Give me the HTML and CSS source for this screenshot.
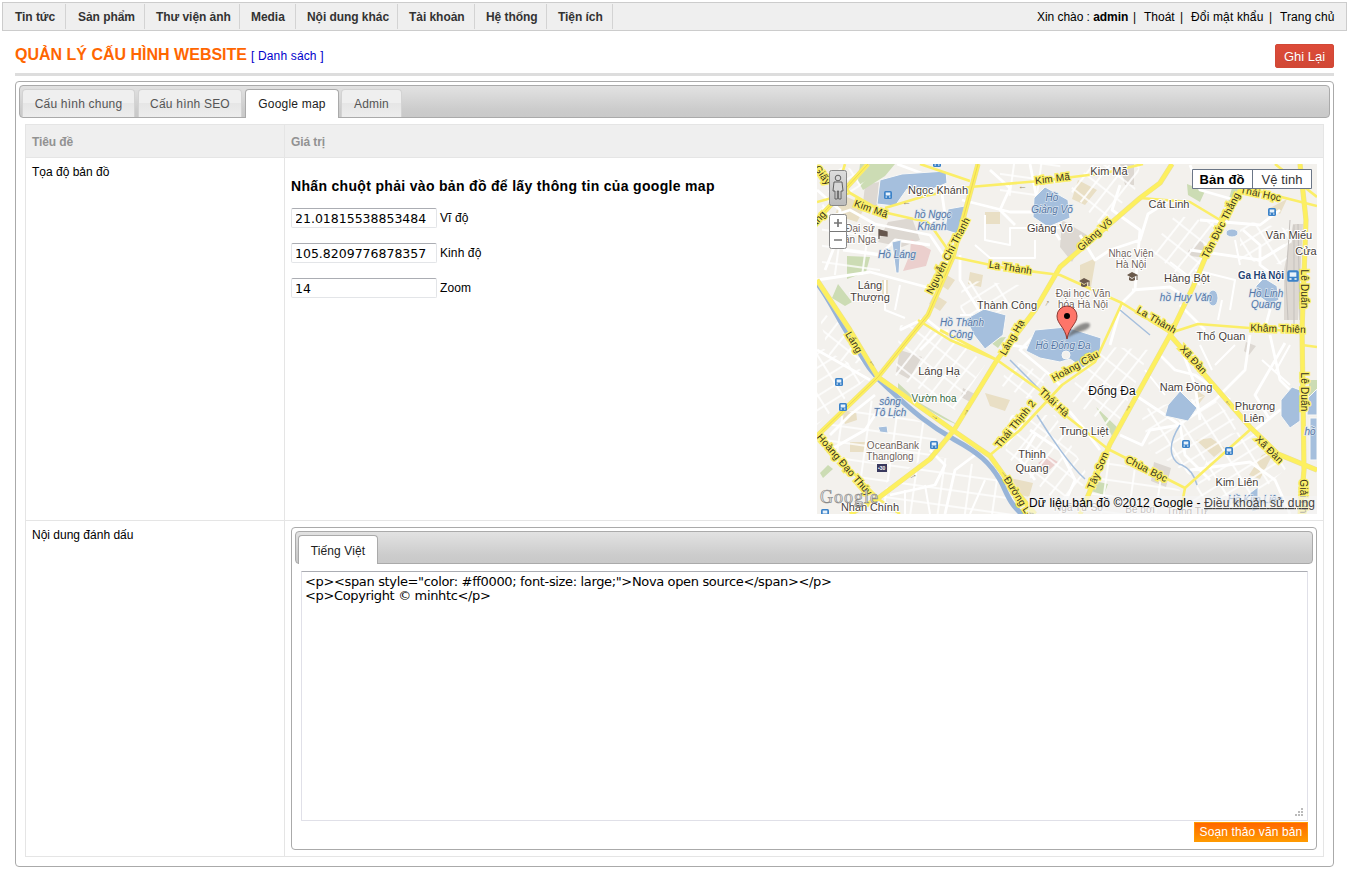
FILE: index.html
```html
<!DOCTYPE html>
<html lang="vi">
<head>
<meta charset="utf-8">
<title>Quản lý cấu hình website</title>
<link rel="stylesheet" href="styles.css">
</head>
<body>
<header class="menu">
  <nav class="menu-nav">
    <a class="w1"><span>Tin tức</span></a><a class="w2"><span>Sản phẩm</span></a><a class="w3"><span>Thư viện ảnh</span></a><a class="w4"><span>Media</span></a><a class="w5"><span>Nội dung khác</span></a><a class="w6"><span>Tài khoản</span></a><a class="w7"><span>Hệ thống</span></a><a class="w8"><span>Tiện ích</span></a>
  </nav>
  <div class="user"><span class="u1">Xin chào : <b>admin</b></span><span class="u2">|</span><span class="u3">Thoát</span><span class="u4">|</span><span class="u5">Đổi mật khẩu</span><span class="u6">|</span><span class="u7">Trang chủ</span></div>
</header>
<main class="main">
  <div class="title-row">
    <h1>QUẢN LÝ CẤU HÌNH WEBSITE</h1><span class="list-link">[ Danh sách ]</span>
    <button class="save">Ghi Lại</button>
  </div>
  <section class="tabs outer">
    <div class="tab-strip">
      <a class="tab t1">Cấu hình chung</a><a class="tab t2">Cấu hình SEO</a><a class="tab active t3">Google map</a><a class="tab t4">Admin</a>
    </div>
    <div class="grid">
      <div class="cell head">Tiêu đề</div><div class="cell head">Giá trị</div>
      <div class="cell">Tọa độ bản đồ</div>
      <div class="cell map-cell">
        <div class="fields">
          <h3>Nhấn chuột phải vào bản đồ để lấy thông tin của google map</h3>
          <label><input value="21.01815538853484">Vĩ độ</label>
          <label><input value="105.8209776878357">Kinh độ</label>
          <label><input value="14">Zoom</label>
        </div>
        <svg class="map" viewBox="817 164 500 350" width="500" height="350">
          <defs>
            <pattern id="ga" width="13" height="19" patternUnits="userSpaceOnUse" patternTransform="rotate(38)"><path d="M0 1H13M1 0V19" class="alley"/></pattern>
            <pattern id="gb" width="21" height="12" patternUnits="userSpaceOnUse" patternTransform="rotate(-32)"><path d="M0 1H21M1 0V12" class="alley"/></pattern>
            <pattern id="gc" width="27" height="16" patternUnits="userSpaceOnUse" patternTransform="rotate(8)"><path d="M0 1H27M1 0V16" class="alley"/></pattern>
            <linearGradient id="ctl" x2="0" y2="1"><stop offset="0" stop-color="#ddd"/><stop offset="1" stop-color="#bbb"/></linearGradient>
            <filter id="blur"><feGaussianBlur stdDeviation="1.3"/></filter>
            <g id="bus"><rect x="-4" y="-4" width="8" height="8" rx="1.5" fill="#3b82c8"/><rect x="-2.3" y="-2.5" width="4.600" height="3" fill="#e8f2fb"/><path d="M-2.5 2h1.5M1 2h1.5" stroke="#fff"/></g>
            <g id="cap"><path d="M-5 -1L0 -4L6 -1L0 2Z M-3 1V4Q0 6 3 4V1L0 3Z" fill="#6b5a4c"/><path d="M5 -1V4" stroke="#6b5a4c"/></g>
          </defs>
          <rect x="817" y="164" width="500" height="350" fill="#f3f1ed"/>
          <g fill="#e9dfc5">
            <path d="M842 195L866 205L857 222L835 215ZM985 212H1000V224H985ZM970 272L983 275L981 287L968 284ZM985 393L1010 400L1005 411L990 406ZM1010 478L1033 483L1029 497L1009 492ZM1078 180L1097 190L1085 205L1072 199ZM1080 265L1096 258L1091 287L1080 286ZM850 442H865V452H850ZM1196 390L1205 396L1198 405ZM1262 455L1275 450L1260 479L1249 475ZM1211 438L1225 448L1214 457L1196 440ZM934 294L947 302L940 311L929 304ZM882 280H888V294H882ZM1270 208L1287 199L1280 214ZM945 274L955 280L948 290L939 284ZM840 412L856 410L857 420L845 424Z"/>
          </g>
          <g fill="#ddd8d2">
            <path d="M888 222L912 218L920 240L902 247L878 242ZM1062 220L1087 235L1072 262L1060 247ZM1188 251L1202 239L1207 258L1190 256ZM900 350L922 357L909 379L896 372ZM1293 224L1303 224L1298 320L1284 320V270ZM1154 462L1171 468L1166 487L1151 481ZM963 388L975 394L970 402L961 397ZM1246 342L1256 346L1249 355L1244 351ZM865 185L879 182L877 208L863 203ZM1120 164H1134V185H1125Z"/>
          </g>
          <g fill="#ccdcb4">
            <path d="M860 164H895L885 176L863 190L858 181ZM847 256L870 257L866 272L847 279ZM1096 407L1118 428L1113 438L1105 422ZM1232 188L1242 190L1229 221L1224 216ZM820 473L828 465L833 469L823 478ZM995 338L1006 337L998 348L990 342ZM898 383L920 403L960 426L944 419L916 403L898 390ZM1187 184L1205 191L1200 202L1188 195ZM1309 380H1317V407H1309ZM838 284L852 302L845 306L832 298ZM1090 480L1108 484L1104 495L1088 490Z"/>
          </g>
          <path d="M911 239L931 250L926 266L903 271L910 254ZM1048 456L1058 462L1048 471L1038 463Z" fill="#ebcfcd"/>
          <g fill="url(#gb)">
            <path d="M817 345L870 375L817 425ZM962 280L1020 285L1005 318L960 315ZM1140 410L1210 395L1240 425L1190 475L1150 450ZM1215 437L1250 430L1290 465L1240 510L1190 505ZM1240 220L1295 230L1285 265L1240 260ZM840 165L870 175L830 220L818 215Z"/>
          </g>
          <g fill="url(#ga)">
            <path d="M818 310L850 330L870 365L830 360ZM900 325L950 330L985 365L955 410L895 375ZM1085 345L1150 350L1115 430L1070 400ZM1010 415L1055 415L1090 480L1060 505L1005 455ZM1175 215L1220 224L1190 285L1150 250ZM1090 165L1140 165L1135 190L1100 225L1070 190ZM1010 360L1050 375L1030 400L1000 385Z"/>
          </g>
          <g fill="url(#gc)">
            <path d="M1000 165L1060 160L1062 200L1000 195ZM817 430L870 400L940 430L930 455L875 490ZM865 500L940 457L1000 470L1020 514H865ZM1100 455L1180 490L1170 514H1085ZM822 225L880 225L880 275L822 275Z"/>
          </g>
          <g class="street">
            <path d="M820 220L850 210L875 224L930 235L950 265M817 280L870 272L930 288M900 330L925 318L940 330L920 350M962 200L1010 212L1062 212M960 255L960 280L985 320M1030 164L1038 205L1060 240M1080 235L1095 260L1110 250L1140 240L1148 214L1170 200M1120 185L1112 210L1140 230L1135 290L1122 303L1110 345M1132 290L1170 287L1190 300M1190 250L1260 260L1285 245M1200 220L1260 225L1280 210M1180 345L1195 385L1200 420M1250 335L1245 370L1215 400L1185 420L1180 425M1160 355L1175 370L1195 375L1230 400M1135 395L1180 425L1185 455L1210 480M1120 435L1142 445L1150 430L1180 425M1190 470L1250 462L1275 480L1290 514M1285 343L1255 395L1270 420M1010 345L1045 350M1040 330L1020 350L1050 375L1060 385M1045 398L1070 412L1085 430L1100 450M1030 430L1060 450L1075 480L1060 514M1035 435L1020 460L1035 480M945 514L955 470L975 455M930 450L945 465L935 485L890 495M875 395L850 415L830 435M817 350L870 380M885 400L865 430L830 450M1270 335L1280 380L1310 410M1260 280L1270 310L1265 328M1205 330L1180 305M897 164L940 180L945 215L930 222M990 170L1010 188L1000 210L1015 225M1190 165L1200 190L1235 200M1243 230L1260 245V265L1280 280M1255 430L1280 410L1300 415M817 190L840 210L835 245L825 270M843 250L880 255L895 240L930 245"/>
            <path class="thin" d="M985 215V240L1010 245V228H1062M975 245L990 258H1035V240M885 280V310L905 318M900 285L895 310M960 315H1005M1195 270L1235 280L1230 310M1170 262L1200 285M1215 365L1235 345M1200 345L1212 370M1262 360L1290 385M1290 345L1275 372M1145 370L1165 395M1218 320L1222 300M905 490V514M925 485L930 514M985 480L970 514M1240 265L1235 240"/>
          </g>
          <g fill="#a5bfdd" stroke="#f8f8f6">
            <path d="M880 180L902 174L946 171L947 183L925 192L907 189L895 206L877 204ZM948 209L965 206L958 234L945 230ZM892 242L901 240L899 273L896 273ZM1034 198L1045 187L1068 200L1070 218L1048 227L1033 217ZM966 319L984 309L1006 315L1003 335L985 349L974 335ZM1035 330L1066 327L1101 338L1100 354L1083 368L1070 359L1060 362L1040 358L1026 351ZM1168 405L1180 391L1197 408L1188 421L1165 416ZM1256 286L1264 278L1277 286L1279 300L1270 304L1256 294ZM1281 400L1292 387L1300 390L1300 421L1290 428L1281 416ZM1308 398L1317 389V415H1307ZM1310 418H1317V460H1310ZM1250 493L1258 487V510L1252 512ZM878 427L887 426L888 433L880 432Z"/>
            <ellipse cx="1232" cy="233" rx="6" ry="4"/><ellipse cx="1213" cy="298" rx="5" ry="8"/><circle cx="1066" cy="355" r="4" fill="#f3f1ed"/>
          </g>
          <path class="river" d="M817 283C830 300 837 317 848 334C862 354 867 371 890 390C912 411 930 426 955 440C979 453 990 463 1000 480C1006 490 1008 503 1024 516"/>
          <path class="brook" d="M1180 425C1163 451 1175 464 1182 465Q1193 470 1197 485M1037 415C1048 433 1070 466 1085 479M1010 360L1045 395M1120 310L1150 335"/>
          <path class="rail" d="M1290 220L1286 280L1288 320M1294 225V324M1298 224L1300 320"/>
          <path class="case" d="M978 164L965 212L953 257L928 315L910 337L878 377L817 436M1172 164L1160 183L1140 198L1060 267L1035 310L997 360L954 430L930 459L877 499L850 514M817 280L850 330L878 377L954 431L990 456L1010 484L1035 514M1242 187L1217 230L1193 287L1170 335L1110 444L1087 498L1080 514M1170 335L1250 427L1278 454L1317 470M1300 164L1306 220L1302 330L1304 470L1300 514M868 164L817 220"/>
          <path class="yellow wide" d="M978 164L965 212L953 257L928 315L910 337L878 377L817 436M1172 164L1160 183L1140 198L1060 267L1035 310L997 360L954 430L930 459L877 499L850 514M817 280L850 330L878 377L954 431L990 456L1010 484L1035 514M1242 187L1217 230L1193 287L1170 335L1110 444L1087 498L1080 514M1170 335L1250 427L1278 454L1317 470M1300 164L1306 220L1302 330L1304 470L1300 514M868 164L817 220"/>
          <path class="yellow" d="M817 202L850 193L883 212L927 222L932 227L953 257L1005 268L1060 275L1122 303L1170 333L1198 324L1302 332M885 208L925 196L970 187L1040 181L1105 173L1143 164M920 164L970 181M1140 198L1190 202L1220 220M1242 187L1317 206M1275 164L1317 197M940 330L997 360L1045 394L1065 415L1108 449L1185 488L1252 428M1185 488L1180 514M1122 303L1095 362L1062 385L1020 430L990 455M817 436L880 500L900 514M918 320L950 340L997 360M1302 345L1317 347M850 193L840 180L845 164"/>
          <path class="road-core" d="M978 164L965 212L953 257L928 315L910 337L878 377L817 436M868 164L817 220"/>
          <g class="arrows"><text x="1018" y="189">←</text><text x="902" y="205">←</text><text x="1046" y="308" transform="rotate(-58 1046 308)">→</text><text x="965" y="417" transform="rotate(-58 965 417)">→</text><text x="868" y="361" transform="rotate(50 868 361)">←</text><text x="930" y="416" transform="rotate(35 930 416)">→</text><text x="1000" y="472" transform="rotate(50 1000 472)">→</text><text x="910" y="480" transform="rotate(-30 910 480)">→</text><text x="1224" y="401" transform="rotate(48 1224 401)">←</text><text x="1127" y="413" transform="rotate(-60 1127 413)">→</text></g>
          <use href="#bus" x="888" y="195"/><use href="#bus" x="839" y="382"/><use href="#bus" x="843" y="407"/><use href="#bus" x="934" y="445"/><use href="#bus" x="1272" y="212"/><use href="#bus" x="1186" y="444"/><use href="#bus" x="1229" y="451"/><use href="#bus" x="937" y="163"/><use href="#bus" x="825" y="513"/>
          <use href="#bus" transform="translate(1293 276) scale(1.45)"/><use href="#cap" x="1084" y="282"/><use href="#cap" x="1132" y="276"/>
          <path d="M879 229V239M879 230L887 232V236L879 235Z" fill="#65564d" stroke="#65564d" stroke-width="1.3"/>
          <rect x="877" y="464" width="10" height="8" fill="#39395e"/><text x="878" y="470" font-size="5" fill="#fff" font-weight="bold">•30</text>
          <g class="water">
            <text x="933" y="218">hồ Ngọc</text><text x="932" y="230">Khánh</text><text x="897" y="258">Hồ Láng</text><text x="1052" y="201">Hồ</text><text x="1052" y="213">Giảng Võ</text><text x="962" y="326">Hồ Thành</text><text x="961" y="338">Công</text><text x="1063" y="349">Hồ Đống Đa</text><text x="1186" y="301">hồ Huy Văn</text><text x="1266" y="297">Hồ Linh</text><text x="1266" y="308">Quang</text><text x="890" y="405">sông</text><text x="890" y="416">Tô Lịch</text><text x="1310" y="435">hồ</text><text x="1255" y="503">Hồ Kim Liên</text>
          </g>
          <g class="roadname">
            <text transform="translate(1053 182) rotate(-7)">Kim Mã</text><text transform="translate(870 212) rotate(20)">Kim Mã</text><text transform="translate(951 257) rotate(-63)" textLength="84">Nguyễn Chí Thanh</text><text transform="translate(1010 271) rotate(9)">La Thành</text><text transform="translate(1097 237) rotate(-42)">Giảng Võ</text><text transform="translate(1224 227) rotate(-63)">Tôn Đức Thắng</text><text transform="translate(1155 323) rotate(30)">La Thành</text><text transform="translate(1015 339) rotate(-60)">Láng Hạ</text><text transform="translate(851 344) rotate(59)">Láng</text><text transform="translate(1278 332) rotate(2)">Khâm Thiên</text><text transform="translate(1191 362) rotate(47)">Xã Đàn</text><text transform="translate(1267 452) rotate(45)">Xã Đàn</text><text transform="translate(1301 289) rotate(90)">Lê Duẩn</text><text transform="translate(1301 392) rotate(90)">Lê Duẩn</text><text transform="translate(1077 369) rotate(-29)">Hoàng Cầu</text><text transform="translate(1052 405) rotate(43)">Thái Hà</text><text transform="translate(1018 426) rotate(-51)">Thái Thịnh 2</text><text transform="translate(1101 472) rotate(-67)">Tây Sơn</text><text transform="translate(1145 472) rotate(27)">Chùa Bộc</text><text transform="translate(842 467) rotate(49)">Hoàng Đạo Thúy</text><text transform="translate(1019 504) rotate(58)">Đường Láng</text><text transform="translate(1260 197) rotate(12)">Thái Học</text><text transform="translate(819 223) rotate(-48)">Láng</text><text transform="translate(820 177) rotate(55)">Giấy</text><text transform="translate(1300 505) rotate(90)">Giải Phóng</text>
          </g>
          <g class="place">
            <text x="938" y="194" textLength="60">Ngọc Khánh</text><text x="1109" y="175">Kim Mã</text><text x="1050" y="232">Giảng Võ</text><text x="1169" y="208">Cát Linh</text><text x="1289" y="239">Văn Miếu</text><text x="1306" y="255">Cửa</text><text x="1187" y="282">Hàng Bột</text><text x="870" y="289">Láng</text><text x="870" y="301">Thượng</text><text x="1007" y="309" textLength="60">Thành Công</text><text x="1221" y="340">Thổ Quan</text><text x="939" y="375">Láng Hạ</text><text x="1186" y="391">Nam Đồng</text><text x="1084" y="435">Trung Liệt</text><text x="1032" y="458">Thịnh</text><text x="1032" y="472">Quang</text><text x="1255" y="410">Phương</text><text x="1254" y="422">Liên</text><text x="1237" y="486">Kim Liên</text><text x="870" y="511" textLength="58">Nhân Chính</text><text x="1112" y="395" class="big">Đống Đa</text>
          </g>
          <g class="poi"><text x="860" y="232">Đại sứ</text><text x="860" y="243">án Nga</text><text x="1131" y="257" textLength="45">Nhạc Viện</text><text x="1131" y="268">Hà Nội</text><text x="1083" y="297">Đại học Văn</text><text x="1083" y="308">hóa Hà Nội</text><text x="893" y="449">OceanBank</text><text x="890" y="460">Thanglong</text><text x="1079" y="511">Ngã Tư Sở</text><text x="1140" y="513">Bể bơi</text><text x="1187" y="515">Trung Tự</text><text x="934" y="402" fill="#33663a">Vườn hoa</text><text x="1261" y="279" fill="#1f4272" font-weight="bold" textLength="46">Ga Hà Nội</text></g>
          <path d="M1067 338C1072 325 1090 319 1090 325S1077 331 1067 338Z" fill="#555" opacity=".65" filter="url(#blur)"/>
          <path d="M1067 339C1065 327 1057 324 1057 316A10 10 0 0 1 1077 316C1077 324 1069 327 1067 339Z" fill="#fe7569" stroke="#8b3731" stroke-width="1"/><circle cx="1067" cy="316" r="3"/>
          <rect x="1028" y="496" width="289" height="18" fill="#f5f5f5" opacity=".65"/>
          <text class="logo" x="820" y="503">Google</text>
          <text class="copy" x="1029" y="507" textLength="286">Dữ liệu bản đồ ©2012 Google - <tspan text-decoration="underline" fill="#444">Điều khoản sử dụng</tspan></text>
          <rect x="829.5" y="170.5" width="17" height="35" rx="2" fill="url(#ctl)" stroke="#888"/>
          <g fill="#d7d7d7" stroke="#555" stroke-width=".9"><circle cx="838" cy="178" r="2.8"/><path d="M834 182H842L843 191H841V199H838.700V191H837.300V199H835V191H833Z"/></g>
          <rect x="829.5" y="214.5" width="17" height="34" rx="2" fill="#fff" stroke="#888"/><path d="M830 231.5H846" stroke="#777"/><path d="M834 223H842M838 219V227M834 240H842" stroke="#777" stroke-width="1.7"/>
          <path d="M1192.500 169.500H1311.500V188.500H1192.500ZM1252.500 169V188" fill="#fff" stroke="#6b7687"/>
          <text class="maptype" x="1222" y="184" font-weight="bold" textLength="45">Bản đồ</text><text class="maptype" x="1282" y="184" textLength="41" fill="#333">Vệ tinh</text>
        </svg>
      </div>
      <div class="cell last">Nội dung đánh dấu</div>
      <div class="cell last">
        <section class="tabs inner">
          <div class="tab-strip"><a class="tab active t5">Tiếng Việt</a></div>
          <div class="editor">
            <textarea spellcheck="false">&lt;p&gt;&lt;span style="color: #ff0000; font-size: large;"&gt;Nova open source&lt;/span&gt;&lt;/p&gt;
&lt;p&gt;Copyright © minhtc&lt;/p&gt;</textarea>
            <svg class="grip" width="9" height="9" viewBox="0 0 9 9"><path d="M7 0h2v2H7zM4 3h2v2H4zM7 3h2v2H7zM1 6h2v2H1zM4 6h2v2H4zM7 6h2v2H7z" fill="#bbb"/></svg>
            <button class="compose">Soạn thảo văn bản</button>
          </div>
        </section>
      </div>
    </div>
  </section>
</main>
</body>
</html>
```
FILE: styles.css
```css
* { box-sizing: border-box; }
body { margin: 0; padding: 2px; width: 1349px; background: #fff; color: #000; font: 12px/15px "Liberation Sans", Arial, sans-serif; }
a { white-space: nowrap; }
.menu { display: flex; justify-content: space-between; height: 29px; background: #efefef; border: 1px solid #ccc; }
.menu-nav { display: flex; padding: 1px 0; }
.menu-nav a { padding: 6px 0 0 12px; border-right: 1px solid #d3d3d3; color: #333; font-weight: bold; letter-spacing: -.05px; }
.menu-nav .w3, .menu-nav .w4, .menu-nav .w5, .menu-nav .w6, .menu-nav .w7, .menu-nav .w8 { padding-left: 11px; }
.w1 { width: 63px; }
.w2 { width: 79px; }
.w3 { width: 95px; }
.w4 { width: 56px; }
.w5 { width: 102px; }
.w6 { width: 77px; }
.w7 { width: 72px; }
.w8 { width: 66px; }
.user { display: flex; padding-top: 7px; white-space: nowrap; }
.u1 { width: 96px; letter-spacing: -.05px; }
.u2 { width: 11px; }
.u3 { width: 36px; }
.u4 { width: 11px; }
.u5 { width: 78px; letter-spacing: .15px; }
.u6 { width: 11px; }
.u7 { width: 66px; letter-spacing: .1px; }
.main { padding: 0 13px; }
.title-row { display: flex; height: 45px; border-bottom: 3px solid #ddd; }
h1 { margin: 14px 4px 0 0; width: 232px; color: #f60; font-size: 16px; line-height: 19px; white-space: nowrap; }
.list-link { margin-top: 18px; color: #00c; letter-spacing: .15px; }
.save { width: 59px; height: 24px; margin: 13px 0 0 auto; padding: 0; border: 1px solid #d14836; border-radius: 2px; background: linear-gradient(#dd4b39, #d14836); color: #fff; font: 13px "Liberation Sans", Arial, sans-serif; text-shadow: 0 1px rgba(0, 0, 0, .1); }
.tabs { border: 1px solid #aaa; border-radius: 4px; padding: 3px; }
.outer { height: 786px; margin-top: 5px; }
.tab-strip { display: flex; height: 33px; padding: 3px 0 0 2px; border: 1px solid #aaa; border-radius: 4px; background: linear-gradient(#e2e2e2, #ccc 75%, #c9c9c9); }
.tab { height: 28px; margin-right: 3px; padding-top: 7px; border: 1px solid #d3d3d3; border-bottom: 0; border-radius: 4px 4px 0 0; background: linear-gradient(#efefef 50%, #e6e6e6 50%, #ededed); color: #555; text-align: center; letter-spacing: .2px; }
.tab.active { height: 29px; border-color: #aaa; background: #fff; color: #212121; }
.t1 { width: 113px; }
.t2 { width: 104px; }
.t3 { width: 94px; margin-right: 2px; }
.t4 { width: 61px; }
.t5 { width: 80px; }
.inner .t5 { letter-spacing: .1px; }
.grid { display: grid; grid-template-columns: 259px 1039px; grid-template-rows: 33px 363px 336px; width: 1299px; margin: 6px 0 0 6px; border: solid #e5e5e5; border-width: 1px 0 0 1px; }
.cell { padding: 6px; border: solid #e5e5e5; border-width: 0 1px 1px 0; line-height: 17px; }
.head { padding-top: 9px; background: #efefef; color: #929292; font-weight: bold; letter-spacing: -.1px; }
.map-cell { display: flex; justify-content: space-between; }
.map { display: block; overflow: hidden; font-family: "Liberation Sans", Arial, sans-serif; }
.fields { display: flex; flex-direction: column; }
h3 { width: 424px; margin: 13px 0; font-size: 14px; line-height: 18px; letter-spacing: .32px; white-space: nowrap; }
label { display: flex; align-items: center; height: 20px; margin-bottom: 15px; gap: 3px; letter-spacing: .1px; }
input { width: 146px; height: 20px; padding: 1px 3px 1px 4px; border: 1px solid #e3e5e8; border-top-color: #abadb3; border-radius: 2px; font: 12.5px "DejaVu Sans", sans-serif; text-indent: -1px; }
.inner { height: 323px; }
.editor { position: relative; display: flex; flex-direction: column; align-items: flex-end; margin: 7px 5px 0 6px; gap: 1px; }
textarea { width: 100%; height: 250px; padding: 3px; resize: none; border: 1px solid #e0e0e8; border-top-color: #abadb3; border-radius: 1px; overflow: hidden; font: 13px/14px "DejaVu Sans", sans-serif; letter-spacing: -.35px; }
.grip { position: absolute; right: 5px; top: 237px; }
.compose { width: 114px; height: 20px; padding: 0; border: 1px solid #f90; background: linear-gradient(#f60, #f90); color: #fff; font: 12px "Liberation Sans", Arial, sans-serif; letter-spacing: .12px; white-space: nowrap; }
.alley { fill: none; stroke: #fff; stroke-width: 1.7; }
.street { fill: none; stroke: #fff; stroke-width: 2.8; stroke-linejoin: round; }
.street .thin { stroke-width: 2; }
.river { fill: none; stroke: #97b4d8; stroke-width: 5; }
.brook { fill: none; stroke: #a5bfdd; stroke-width: 1.5; }
.rail { fill: none; stroke: #c5c1bd; stroke-width: 1; }
.case { fill: none; stroke: #e9df98; stroke-width: 5.2; stroke-linejoin: round; }
.yellow { fill: none; stroke: #fbee67; stroke-width: 2.6; stroke-linejoin: round; }
.yellow.wide { stroke-width: 4.2; stroke: #fdf05f; }
.road-core { fill: none; stroke: #e6cf55; stroke-width: .8; }
.arrows { font-size: 9px; fill: #999066; }
.water { font-size: 10px; font-style: italic; fill: #5577a6; text-anchor: middle; stroke: #dbe5ef; stroke-width: 1.3px; paint-order: stroke; }
.roadname { font-size: 10px; fill: #36321c; text-anchor: middle; stroke: #fbef68; stroke-width: 3px; paint-order: stroke; letter-spacing: .2px; }
.place { font-size: 11px; fill: #483e3a; text-anchor: middle; stroke: #fff; stroke-width: 2px; paint-order: stroke; }
.place .big { font-size: 12px; fill: #111; }
.poi { font-size: 10px; fill: #70635b; text-anchor: middle; stroke: #fff; stroke-width: 2px; paint-order: stroke; }
.logo { font: 18px "Liberation Serif", serif; fill: #eee; stroke: #888; stroke-width: .7px; letter-spacing: 1px; }
.copy { font-size: 12px; fill: #000; }
.maptype { font-size: 13px; text-anchor: middle; }
```
